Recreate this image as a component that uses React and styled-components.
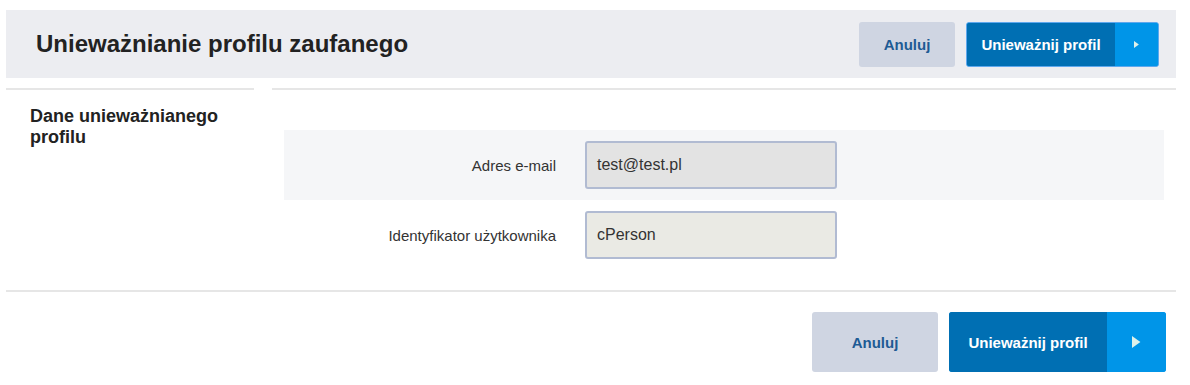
import React from "react";
import styled, { createGlobalStyle } from "styled-components";

const Global = createGlobalStyle`
  html, body { margin: 0; padding: 0; background: #fff; }
  body { font-family: "Liberation Sans", Arial, sans-serif; color: #222; }
  * { box-sizing: border-box; }
`;

const Page = styled.div`
  width: 1190px;
  padding: 10px 14px 0 6px;
`;

const Header = styled.header`
  height: 68px;
  background: #ecedf1;
  display: flex;
  align-items: center;
  justify-content: space-between;
  padding: 0 17px 0 30px;
`;

const Title = styled.h1`
  margin: 0;
  font-size: 24px;
  font-weight: 700;
  color: #222;
  letter-spacing: 0;
`;

const Actions = styled.div`
  display: flex;
  align-items: center;
  gap: ${(p) => p.$gap}px;
`;

const CancelButton = styled.button`
  font-family: "Liberation Sans", Arial, sans-serif;
  font-weight: 700;
  font-size: 15px;
  color: #1e5b94;
  background: #cfd5e2;
  border: none;
  border-radius: 3px;
  width: ${(p) => (p.$large ? 126 : 96)}px;
  height: ${(p) => (p.$large ? 60 : 45)}px;
  padding: 0;
  cursor: pointer;
`;

const PrimaryButton = styled.button`
  font-family: "Liberation Sans", Arial, sans-serif;
  display: flex;
  align-items: stretch;
  padding: 0;
  border: ${(p) => (p.$large ? "none" : "1px solid #5ea8ee")};
  border-radius: 3px;
  overflow: hidden;
  width: ${(p) => (p.$large ? 217 : 193)}px;
  height: ${(p) => (p.$large ? 60 : 45)}px;
  background: #0095e8;
  cursor: pointer;
`;

const PrimaryLabel = styled.span`
  flex: 1;
  display: flex;
  align-items: center;
  justify-content: center;
  background: #006fb3;
  color: #fff;
  font-weight: 700;
  font-size: 15px;
`;

const ArrowPart = styled.span`
  width: ${(p) => (p.$large ? 59 : 43)}px;
  display: flex;
  align-items: center;
  justify-content: center;
  background: #0095e8;
`;

const DividerRow = styled.div`
  display: flex;
  gap: 18px;
  margin-top: 10px;
`;

const Rule = styled.div`
  height: 2px;
  background: #e6e6e6;
  flex: ${(p) => (p.$fixed ? `0 0 ${p.$fixed}px` : "1")};
`;

const Body = styled.div`
  display: flex;
  gap: 18px;
`;

const Side = styled.div`
  flex: 0 0 248px;
  padding: 16px 0 0 24px;
`;

const SectionTitle = styled.h2`
  margin: 0;
  font-size: 18px;
  line-height: 21px;
  font-weight: 700;
  color: #222;
`;

const Form = styled.div`
  flex: 1;
  padding: 40px 12px 20px 12px;
  display: flex;
  flex-direction: column;
`;

const FieldRow = styled.div`
  display: grid;
  grid-template-columns: 272px 252px;
  column-gap: 29px;
  align-items: center;
  height: 70px;
  background: ${(p) => (p.$shaded ? "#f5f6f8" : "transparent")};
`;

const Label = styled.label`
  text-align: right;
  font-size: 15px;
  color: #333;
`;

const Input = styled.div`
  height: 48px;
  border: 2px solid #b1bbd2;
  border-radius: 3px;
  background: ${(p) => p.$bg};
  display: flex;
  align-items: center;
  padding-left: 10px;
  font-size: 16px;
  color: #333;
`;

const Footer = styled.div`
  display: flex;
  justify-content: flex-end;
  padding: 20px 10px 0 0;
`;

const Arrow = ({ size }) => (
  <svg width={size * 0.7} height={size} viewBox="0 0 7 10">
    <polygon points="0,0 7,5 0,10" fill="#dff1ea" />
  </svg>
);

export default function App() {
  return (
    <Page>
      <Global />
      <Header>
        <Title>Unieważnianie profilu zaufanego</Title>
        <Actions $gap={11}>
          <CancelButton>Anuluj</CancelButton>
          <PrimaryButton>
            <PrimaryLabel>Unieważnij profil</PrimaryLabel>
            <ArrowPart>
              <Arrow size={7} />
            </ArrowPart>
          </PrimaryButton>
        </Actions>
      </Header>
      <DividerRow>
        <Rule $fixed={248} />
        <Rule />
      </DividerRow>
      <Body>
        <Side>
          <SectionTitle>
            Dane unieważnianego
            <br />
            profilu
          </SectionTitle>
        </Side>
        <Form>
          <FieldRow $shaded>
            <Label>Adres e-mail</Label>
            <Input $bg="#e3e3e3">test@test.pl</Input>
          </FieldRow>
          <FieldRow>
            <Label>Identyfikator użytkownika</Label>
            <Input $bg="#eaeae4">cPerson</Input>
          </FieldRow>
        </Form>
      </Body>
      <Rule />
      <Footer>
        <Actions $gap={11}>
          <CancelButton $large>Anuluj</CancelButton>
          <PrimaryButton $large>
            <PrimaryLabel>Unieważnij profil</PrimaryLabel>
            <ArrowPart $large>
              <Arrow size={12} />
            </ArrowPart>
          </PrimaryButton>
        </Actions>
      </Footer>
    </Page>
  );
}
